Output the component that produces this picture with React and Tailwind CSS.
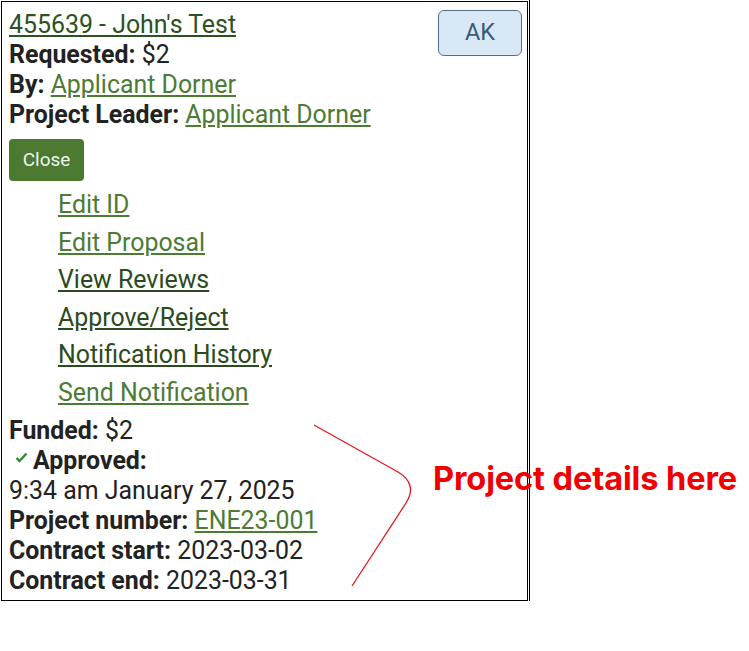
import React from 'react'

const actions = [
    { label: 'Edit ID', visited: false },
    { label: 'Edit Proposal', visited: false },
    { label: 'View Reviews', visited: true },
    { label: 'Approve/Reject', visited: true },
    { label: 'Notification History', visited: true },
    { label: 'Send Notification', visited: false },
]

const Field = ({ label, children }) => (
    <div className="h-[30px] leading-[30px] whitespace-nowrap">
        <span className="font-bold">{label}</span> {children}
    </div>
)

const App = () => {
    return (
        <div className="relative w-[749px] h-[651px] bg-white text-[24.9px] text-[#222] font-['Roboto',sans-serif] overflow-hidden">
            <div className="w-[530px] h-[601px] border-r border-black pl-[1px] pt-[1px]">
                <div className="w-[527px] h-[600px] border border-black px-[7px] pt-[8px]">
                    <div className="flex justify-between items-start">
                        <div>
                            <div className="h-[30px] leading-[30px] whitespace-nowrap">
                                <a href="#" className="underline text-[#2f5022]">455639 - John's Test</a>
                            </div>
                            <Field label="Requested:">$2</Field>
                            <Field label="By:">
                                <a href="#" className="underline text-[#4d7a35]">Applicant Dorner</a>
                            </Field>
                            <Field label="Project Leader:">
                                <a href="#" className="underline text-[#4d7a35]">Applicant Dorner</a>
                            </Field>
                        </div>
                        <button className="w-[84px] h-[46px] -mr-[2px] rounded-[6px] border border-[#56708c] bg-[#d8e9f5] text-[#3a5a7a] text-[23.5px]">
                            AK
                        </button>
                    </div>
                    <button className="mt-[9px] w-[75px] h-[42px] rounded-[4px] bg-[#4b7a30] text-[#f0f4ec] text-[19px]">
                        Close
                    </button>
                    <div className="mt-[5px] pl-[49px]">
                        {actions.map((a) => (
                            <div key={a.label} className="h-[37.5px] leading-[37.5px] whitespace-nowrap">
                                <a
                                    href="#"
                                    className={`underline ${a.visited ? 'text-[#2c4a20]' : 'text-[#4d7a35]'}`}
                                >
                                    {a.label}
                                </a>
                            </div>
                        ))}
                    </div>
                    <div className="mt-[5px]">
                        <Field label="Funded:">$2</Field>
                        <div className="h-[30px] leading-[30px] flex items-center">
                            <svg width="13" height="11" viewBox="0 0 13 11" className="ml-[6px] mr-[5px] -mt-[8px]">
                                <polyline points="1.5,6 4.5,9 11.5,1.5" fill="none" stroke="#2e8b2e" strokeWidth="2.4" />
                            </svg>
                            <span className="font-bold">Approved:</span>
                        </div>
                        <div className="h-[30px] leading-[30px] whitespace-nowrap">9:34 am January 27, 2025</div>
                        <Field label="Project number:">
                            <a href="#" className="underline text-[#4d7a35]">ENE23-001</a>
                        </Field>
                        <Field label="Contract start:">2023-03-02</Field>
                        <Field label="Contract end:">2023-03-31</Field>
                    </div>
                </div>
            </div>

            <svg className="absolute left-0 top-0 pointer-events-none" width="749" height="651">
                <path d="M314 425 L398 472 Q418 484 406 503 L352 586" fill="none" stroke="#e8161c" strokeWidth="1.3" />
            </svg>
            <div className="absolute left-[433px] top-[459px] text-[32.5px] leading-[40px] font-bold text-[#f00000] font-['Inter',sans-serif] tracking-[-0.1px] whitespace-nowrap">
                Project details here
            </div>
        </div>
    )
}

export default App
